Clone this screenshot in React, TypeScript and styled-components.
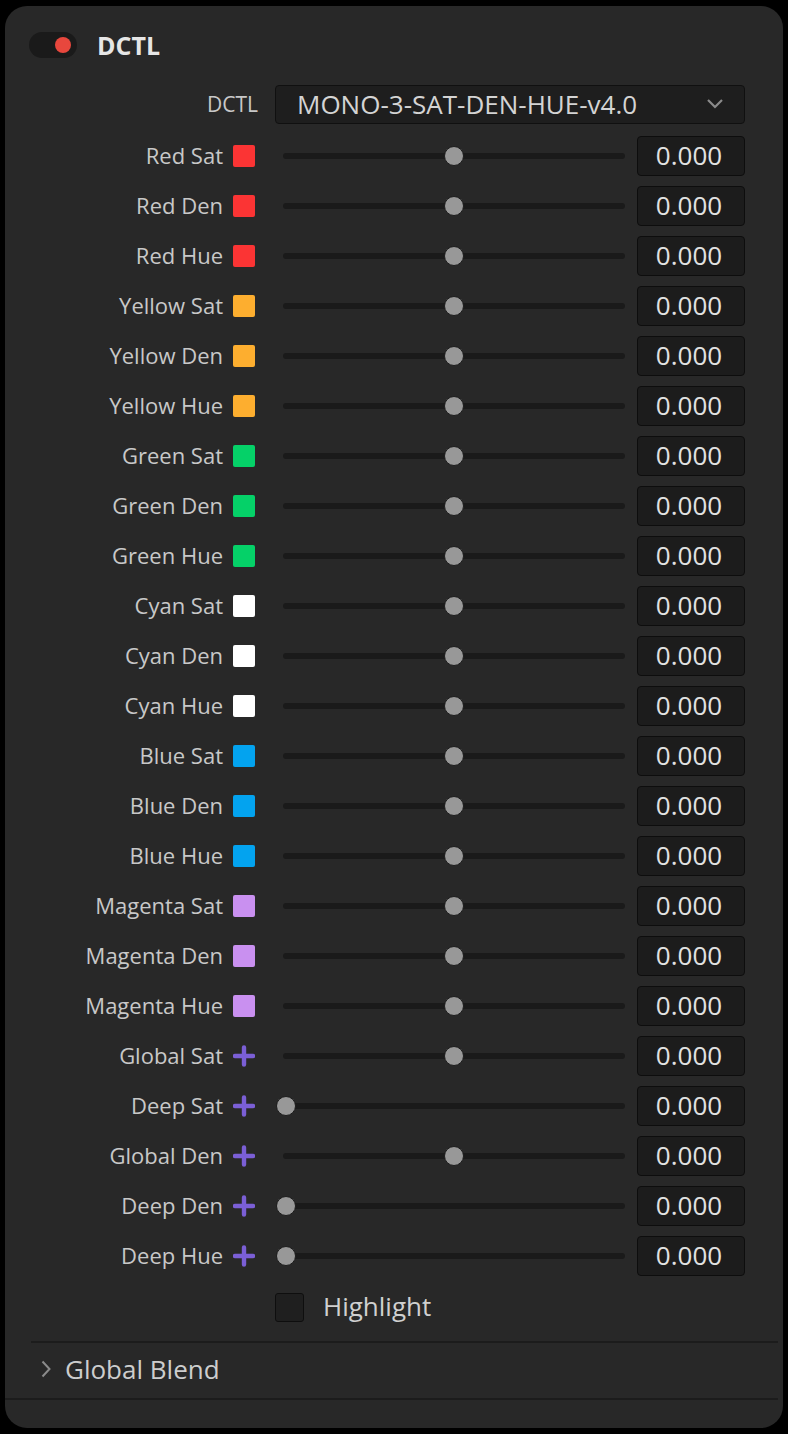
import React from "react";
import styled, { createGlobalStyle } from "styled-components";

const Global = createGlobalStyle`
  html, body { margin: 0; padding: 0; background: #000; }
  body { font-family: "Open Sans", "Noto Sans", sans-serif; }
  * { box-sizing: border-box; }
`;

const Page = styled.div`
  width: 788px;
  height: 1434px;
  padding: 6px 5px 6px 5px;
  background: #000;
`;

const Panel = styled.div`
  width: 778px;
  height: 1422px;
  background: #282828;
  border-radius: 22px;
  display: flex;
  flex-direction: column;
  overflow: hidden;
`;

const Header = styled.div`
  display: flex;
  align-items: center;
  height: 26px;
  margin-top: 26px;
  padding-left: 24px;
  gap: 20px;
`;

const Toggle = styled.div`
  width: 48px;
  height: 26px;
  border-radius: 13px;
  background: #1a1a1a;
  display: flex;
  align-items: center;
  justify-content: flex-end;
  padding-right: 6px;
`;

const Dot = styled.div`
  width: 16px;
  height: 16px;
  border-radius: 50%;
  background: #e8473d;
`;

const Title = styled.div`
  color: #e6e6e6;
  font-size: 25px;
  font-weight: 700;
  line-height: 26px;
`;

const SelectRow = styled.div`
  display: flex;
  align-items: center;
  margin-top: 27px;
  height: 39px;
`;

const SelectLabel = styled.div`
  width: 253px;
  text-align: right;
  color: #c8c8c8;
  font-size: 21px;
  padding-bottom: 2px;
`;

const Select = styled.div`
  margin-left: 17px;
  width: 470px;
  height: 39px;
  background: #1e1e1e;
  border: 1px solid #101010;
  border-radius: 4px;
  display: flex;
  align-items: center;
  justify-content: space-between;
  padding: 0 20px 1px 21px;
  color: #d4d4d4;
  font-size: 26px;
`;

const Rows = styled.div`
  margin-top: 7px;
  display: flex;
  flex-direction: column;
`;

const Row = styled.div`
  display: flex;
  align-items: center;
  height: 50px;
`;

const Label = styled.div`
  width: 218px;
  text-align: right;
  color: #c8c8c8;
  font-size: 22px;
  white-space: nowrap;
  padding-bottom: 2px;
`;

const Swatch = styled.div<{ $color: string }>`
  margin-left: 10px;
  width: 22px;
  height: 22px;
  border-radius: 2px;
  background: ${(p) => p.$color};
`;

const PlusWrap = styled.div`
  margin-left: 10px;
  width: 22px;
  height: 22px;
  display: flex;
  align-items: center;
  justify-content: center;
`;

const Slider = styled.div`
  position: relative;
  margin-left: 28px;
  width: 342px;
  height: 20px;
  display: flex;
  align-items: center;
`;

const Track = styled.div`
  width: 100%;
  height: 6px;
  border-radius: 3px;
  background: #1a1a1a;
`;

const Thumb = styled.div`
  position: absolute;
  top: 0;
  width: 20px;
  height: 20px;
  border-radius: 50%;
  background: #989898;
  border: 1px solid #1c1c1c;
`;

const Value = styled.div`
  margin-left: 12px;
  width: 108px;
  height: 40px;
  background: #1c1c1c;
  border: 1px solid #0d0d0d;
  border-radius: 4px;
  display: flex;
  align-items: center;
  justify-content: center;
  padding: 0 4px 2px 0;
  color: #e2e2e2;
  font-size: 26px;
`;

const CheckRow = styled.div`
  display: flex;
  align-items: center;
  height: 52px;
  padding-left: 270px;
  gap: 19px;
`;

const Checkbox = styled.div`
  width: 29px;
  height: 29px;
  border-radius: 3px;
  background: #1f1f1f;
  border: 1px solid #0e0e0e;
`;

const CheckLabel = styled.div`
  color: #d0d0d0;
  font-size: 26px;
  padding-bottom: 2px;
`;

const Divider = styled.div<{ $inset: number }>`
  height: 2px;
  background: #1c1c1c;
  margin-left: ${(p) => p.$inset}px;
  margin-right: 5px;
`;

const Section = styled.div`
  display: flex;
  align-items: center;
  height: 55px;
  padding: 0 0 3px 35px;
  gap: 11px;
  color: #cdcdcd;
  font-size: 26px;
`;

type Item = { label: string; color?: string; value: number };

const rows: Item[] = [
  { label: "Red Sat", color: "#fb3434", value: 0.5 },
  { label: "Red Den", color: "#fb3434", value: 0.5 },
  { label: "Red Hue", color: "#fb3434", value: 0.5 },
  { label: "Yellow Sat", color: "#fdae2f", value: 0.5 },
  { label: "Yellow Den", color: "#fdae2f", value: 0.5 },
  { label: "Yellow Hue", color: "#fdae2f", value: 0.5 },
  { label: "Green Sat", color: "#05d168", value: 0.5 },
  { label: "Green Den", color: "#05d168", value: 0.5 },
  { label: "Green Hue", color: "#05d168", value: 0.5 },
  { label: "Cyan Sat", color: "#ffffff", value: 0.5 },
  { label: "Cyan Den", color: "#ffffff", value: 0.5 },
  { label: "Cyan Hue", color: "#ffffff", value: 0.5 },
  { label: "Blue Sat", color: "#03a3ef", value: 0.5 },
  { label: "Blue Den", color: "#03a3ef", value: 0.5 },
  { label: "Blue Hue", color: "#03a3ef", value: 0.5 },
  { label: "Magenta Sat", color: "#c990f0", value: 0.5 },
  { label: "Magenta Den", color: "#c990f0", value: 0.5 },
  { label: "Magenta Hue", color: "#c990f0", value: 0.5 },
  { label: "Global Sat", value: 0.5 },
  { label: "Deep Sat", value: 0 },
  { label: "Global Den", value: 0.5 },
  { label: "Deep Den", value: 0 },
  { label: "Deep Hue", value: 0 },
];

const Plus = () => (
  <svg width="22" height="22" viewBox="0 0 22 22">
    <path d="M2 11H20M11 2.5V19.5" stroke="#7b5fd6" strokeWidth="4.4" strokeLinecap="round" />
  </svg>
);

const Chevron = () => (
  <svg width="18" height="12" viewBox="0 0 18 12">
    <path d="M2 2L9 9L16 2" stroke="#8a8a8a" strokeWidth="2.2" fill="none" />
  </svg>
);

const Right = () => (
  <svg width="14" height="20" viewBox="0 0 14 20">
    <path d="M2.5 2.5L9.5 10L2.5 17.5" stroke="#8a8a8a" strokeWidth="2" fill="none" />
  </svg>
);

export default function App() {
  return (
    <Page>
      <Global />
      <Panel>
        <Header>
          <Toggle>
            <Dot />
          </Toggle>
          <Title>DCTL</Title>
        </Header>
        <SelectRow>
          <SelectLabel>DCTL</SelectLabel>
          <Select>
            <span>MONO-3-SAT-DEN-HUE-v4.0</span>
            <Chevron />
          </Select>
        </SelectRow>
        <Rows>
          {rows.map((r) => (
            <Row key={r.label}>
              <Label>{r.label}</Label>
              {r.color ? (
                <Swatch $color={r.color} />
              ) : (
                <PlusWrap>
                  <Plus />
                </PlusWrap>
              )}
              <Slider>
                <Track />
                <Thumb style={{ left: `${-7 + r.value * 336}px` }} />
              </Slider>
              <Value>0.000</Value>
            </Row>
          ))}
        </Rows>
        <CheckRow>
          <Checkbox />
          <CheckLabel>Highlight</CheckLabel>
        </CheckRow>
        <Divider $inset={26} style={{ marginTop: 8 }} />
        <Section>
          <Right />
          <span>Global Blend</span>
        </Section>
        <Divider $inset={0} />
      </Panel>
    </Page>
  );
}
